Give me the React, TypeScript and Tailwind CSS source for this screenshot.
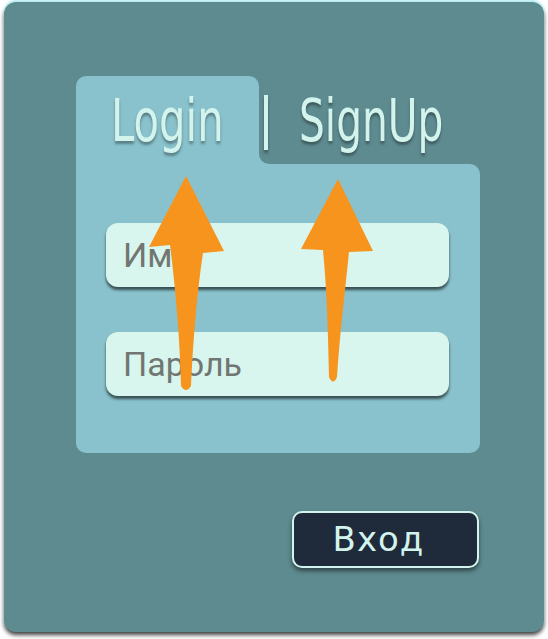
export default function App() {
  return (
    <div className="relative w-[548px] h-[639px] bg-white">
      {/* карточка */}
      <div className="ml-[4px] mt-[2px] w-[540px] h-[630px] rounded-[12px] bg-[#5e8b90] shadow-[0_-2px_2px_#b3ecf0,0_3px_4px_rgba(0,0,0,0.75)] pt-[74px] pl-[72px]">
        <div className="w-[404px]">
          {/* вкладки */}
          <div className="flex h-[88px]">
            <div className="w-[183px] shrink-0 rounded-t-[10px] bg-[#89c2cc] flex justify-center pt-[13px]">
              <span className="inline-block scale-x-[0.8] font-['DejaVu_Sans_Condensed',sans-serif] text-[58px] leading-[64px] text-[#d3f4ed] [text-shadow:0_3px_3px_rgba(0,0,0,0.35)]">
                Login
              </span>
            </div>
            <div className="flex-1 min-w-0 bg-[#89c2cc]">
              <div className="h-full rounded-bl-[10px] bg-[#5e8b90] flex pt-[13px] overflow-visible">
                <div className="ml-[5px] mt-[6px] w-[4px] h-[55px] shrink-0 bg-[#d3f4ed] shadow-[0_3px_3px_rgba(0,0,0,0.35)]" />
                <span className="ml-[31px] shrink-0 inline-block origin-left scale-x-[0.78] font-['DejaVu_Sans_Condensed',sans-serif] text-[58px] leading-[64px] text-[#d3f4ed] [text-shadow:0_3px_3px_rgba(0,0,0,0.35)]">
                  SignUp
                </span>
              </div>
            </div>
          </div>
          {/* форма */}
          <div className="h-[289px] rounded-b-[10px] rounded-tr-[10px] bg-[#89c2cc] pt-[59px] pl-[30px]">
            <div className="w-[343px] h-[64px] rounded-[12px] bg-[#d8f6ee] shadow-[0_3px_3px_rgba(0,0,0,0.6)] flex items-center pl-[17px] font-['Roboto',sans-serif] text-[34px] text-[#717672]">
              Имя
            </div>
            <div className="mt-[45px] w-[343px] h-[64px] rounded-[12px] bg-[#d8f6ee] shadow-[0_3px_3px_rgba(0,0,0,0.6)] flex items-center pl-[17px] font-['Roboto',sans-serif] text-[34px] text-[#717672]">
              Пароль
            </div>
          </div>
          <div className="flex justify-end mt-[58px] pr-[1px]">
            <button className="w-[187px] h-[57px] rounded-[10px] border-2 border-[#d3f4ed] bg-[#1f2a3b] shadow-[0_3px_4px_rgba(0,0,0,0.5)] flex items-center justify-center pr-[14px] font-['DejaVu_Sans',sans-serif] text-[34px] tracking-[1px] text-[#d3f4ed]">
              Вход
            </button>
          </div>
        </div>
      </div>

      {/* стрелки */}
      <svg className="absolute left-0 top-0 pointer-events-none" width="548" height="639" viewBox="0 0 548 639">
        <path
          d="M186 174 L224 249 L203 251 C197 290 193 340 191 384 Q186 392 181 384 C180 340 176 290 170 243 L149 245 Z"
          fill="#f7941d"
        />
        <path
          d="M338 177 L373 249 L349 250 C345 290 340 330 337 375 Q333 384 329 375 C328 330 327 290 323 248 L301 247 Z"
          fill="#f7941d"
        />
      </svg>
    </div>
  )
}
